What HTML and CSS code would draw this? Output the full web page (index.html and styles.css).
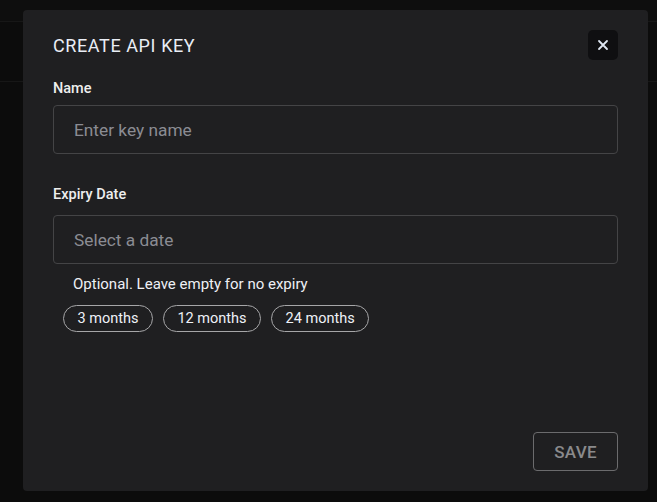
FILE: index.html
```html
<!DOCTYPE html>
<html>
<head>
<meta charset="utf-8">
<link rel="stylesheet" href="styles.css">
</head>
<body>
<div class="page">
  <div class="topbar"></div>
  <div class="toolbar"></div>
</div>
<div class="overlay">
  <div class="dialog">
    <div class="header">
      <h2 class="title">CREATE API KEY</h2>
      <button class="close" aria-label="Close">
        <svg width="12" height="12" viewBox="0 0 12 12"><path d="M2 2 L10 10 M10 2 L2 10" stroke="#dfe6f2" stroke-width="1.8" stroke-linecap="round"/></svg>
      </button>
    </div>
    <label class="label label-first">Name</label>
    <div class="input"><span class="placeholder">Enter key name</span></div>
    <label class="label label-second">Expiry Date</label>
    <div class="input"><span class="placeholder">Select a date</span></div>
    <div class="helper">Optional. Leave empty for no expiry</div>
    <div class="chips">
      <span class="chip">3 months</span>
      <span class="chip">12 months</span>
      <span class="chip">24 months</span>
    </div>
    <div class="footer">
      <button class="save">SAVE</button>
    </div>
  </div>
</div>
</body>
</html>
```
FILE: styles.css
```css
* { box-sizing: border-box; }
html, body { margin: 0; padding: 0; }
body {
  background: #0c0c0c;
  font-family: Roboto, "Liberation Sans", sans-serif;
  width: 657px;
  height: 502px;
  overflow: hidden;
}
.page { height: 502px; }
.topbar {
  height: 22px;
  background: #0e0e0e;
  border-bottom: 1px solid #171717;
}
.toolbar {
  height: 60px;
  border-bottom: 1px solid #171717;
}
.overlay {
  position: absolute;
  left: 0; top: 0;
  width: 657px;
  height: 502px;
}
.dialog {
  position: absolute;
  left: 23px;
  top: 10px;
  width: 625px;
  height: 481px;
  background: #1f1f21;
  border-radius: 4px;
  padding: 20px 30px 20px 30px;
  display: flex;
  flex-direction: column;
}
.header {
  display: flex;
  align-items: center;
  justify-content: space-between;
  height: 30px;
}
.title {
  margin: 0;
  font-size: 18px;
  font-weight: 400;
  letter-spacing: 0.6px;
  color: #e9edf5;
}
.close {
  width: 30px;
  height: 30px;
  border: none;
  border-radius: 5px;
  background: #0f0f11;
  display: flex;
  align-items: center;
  justify-content: center;
  padding: 0;
}
.label {
  display: block;
  font-size: 14.5px;
  font-weight: 500;
  line-height: 20px;
  color: #eeeeee;
}
.label-first { margin-top: 19px; margin-bottom: 6px; }
.label-second { margin-top: 31px; margin-bottom: 10px; }
.input {
  height: 49px;
  border: 1px solid #444446;
  border-radius: 4px;
  display: flex;
  align-items: center;
  padding-left: 20px;
}
.placeholder {
  font-size: 17.3px;
  color: #8b8c93;
}
.helper {
  margin-top: 10px;
  padding-left: 20px;
  font-size: 15px;
  line-height: 20px;
  color: #eef0f5;
}
.chips {
  display: flex;
  gap: 10px;
  margin-top: 11px;
  padding-left: 10px;
}
.chip {
  height: 27px;
  padding: 0 13.5px;
  border: 1px solid #a6a6a8;
  border-radius: 14px;
  font-size: 14.5px;
  color: #eef1f7;
  display: flex;
  align-items: center;
}
.footer {
  margin-top: auto;
  display: flex;
  justify-content: flex-end;
}
.save {
  width: 85px;
  height: 39px;
  background: transparent;
  border: 1px solid #6b6b6d;
  border-radius: 4px;
  font-family: Roboto, "Liberation Sans", sans-serif;
  font-size: 17px;
  font-weight: 500;
  color: #8a8a8c;
  letter-spacing: 0.3px;
}
```
